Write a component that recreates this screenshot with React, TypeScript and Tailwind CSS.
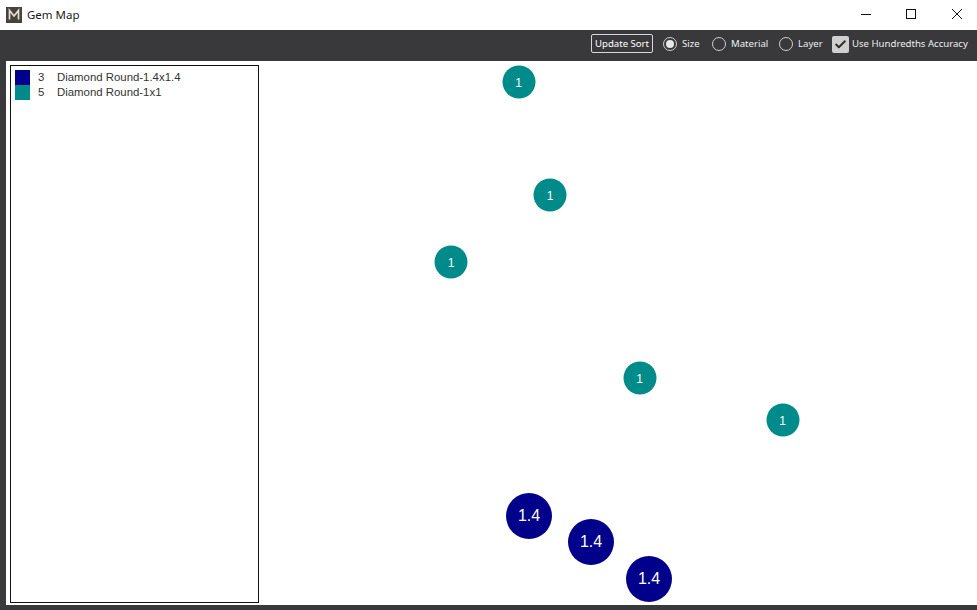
import { Check } from "lucide-react";

const GEMS = [
  { x: 518.5, y: 82, label: "1", big: false },
  { x: 550, y: 195, label: "1", big: false },
  { x: 451, y: 262, label: "1", big: false },
  { x: 639.5, y: 378, label: "1", big: false },
  { x: 782.5, y: 420, label: "1", big: false },
  { x: 529, y: 516, label: "1.4", big: true },
  { x: 591, y: 542, label: "1.4", big: true },
  { x: 649, y: 579, label: "1.4", big: true },
];

const LEGEND = [
  { color: "bg-[#00008b]", count: 3, name: "Diamond Round-1.4x1.4" },
  { color: "bg-[#008b8b]", count: 5, name: "Diamond Round-1x1" },
];

function Radio({ label, checked, width }: { label: string; checked?: boolean; width: string }) {
  return (
    <div className={`flex items-center gap-[5px] ${width}`}>
      <span className="flex h-[14px] w-[14px] shrink-0 items-center justify-center rounded-full border border-[#cfcfcf]">
        {checked && <span className="h-[8px] w-[8px] rounded-full bg-[#e8e8e8]" />}
      </span>
      <span className="whitespace-nowrap">{label}</span>
    </div>
  );
}

export default function App() {
  return (
    <div className="flex h-[610px] w-[977px] flex-col overflow-hidden bg-[#39393c] font-['Noto_Sans',sans-serif]">
      <div className="flex h-[30px] items-center bg-white">
        <svg className="ml-[6px]" width="16" height="16" viewBox="0 0 16 16">
          <rect width="16" height="16" fill="#45433d" />
          <path d="M3.5 12.5V3.5L8 9l4.5-5.5v9" fill="none" stroke="#e4dfd2" strokeWidth="1.7" />
        </svg>
        <span className="ml-[5px] text-[11.5px] text-[#1a1a1a]">Gem Map</span>
        <div className="ml-auto flex items-center pb-[2px] text-[#111]">
          <svg className="mr-[35px]" width="10" height="10" viewBox="0 0 10 10">
            <path d="M0 5.5h10" stroke="currentColor" strokeWidth="1" />
          </svg>
          <svg className="mr-[36px]" width="10" height="10" viewBox="0 0 10 10">
            <rect x="0.5" y="0.5" width="9" height="9" fill="none" stroke="currentColor" strokeWidth="1" />
          </svg>
          <svg className="mr-[15px]" width="10" height="10" viewBox="0 0 10 10">
            <path d="M0 0l10 10M10 0L0 10" stroke="currentColor" strokeWidth="1" />
          </svg>
        </div>
      </div>

      <div className="flex h-[31px] items-center justify-end pb-[2px] pr-[9px] text-[9.6px] text-[#eeeeee]">
        <button className="mb-[2px] mr-[10px] h-[19px] w-[62px] whitespace-nowrap rounded-[2px] border border-[#d8d8d8] text-[9.6px] leading-none text-white">
          Update Sort
        </button>
        <Radio label="Size" checked width="w-[37px] mr-[12px]" />
        <Radio label="Material" width="w-[55px] mr-[12px]" />
        <Radio label="Layer" width="w-[43px] mr-[10px]" />
        <div className="flex items-center gap-[3px]">
          <span className="mb-[1px] flex h-[17px] w-[17px] items-center justify-center rounded-[2px] bg-[#cfcfcf]">
            <Check size={13} strokeWidth={3.5} className="text-[#2c2c2c]" />
          </span>
          <span className="w-[116px] whitespace-nowrap">Use Hundredths Accuracy</span>
        </div>
      </div>

      <div className="relative mb-[5px] ml-[6px] flex-1 bg-white p-[4px] pb-[2px]">
        <div className="h-full w-[249px] border border-[#111] bg-white pl-[4px] pt-[4px] font-['Liberation_Sans',sans-serif] text-[11.4px] text-[#333]">
          {LEGEND.map((item) => (
            <div key={item.name} className="flex h-[15px] items-center">
              <span className={`h-[15px] w-[15px] ${item.color}`} />
              <span className="ml-[8px] w-[19px]">{item.count}</span>
              <span>{item.name}</span>
            </div>
          ))}
        </div>

        {GEMS.map((gem, i) => (
          <div
            key={i}
            style={{ left: gem.x - 6, top: gem.y - 61 }}
            className={`absolute flex -translate-x-1/2 -translate-y-1/2 items-center justify-center rounded-full font-['Liberation_Sans',sans-serif] text-white ${
              gem.big ? "h-[46px] w-[46px] bg-[#00008b] text-[16px]" : "h-[33px] w-[33px] bg-[#008b8b] text-[12px]"
            }`}
          >
            {gem.label}
          </div>
        ))}
      </div>
    </div>
  );
}
